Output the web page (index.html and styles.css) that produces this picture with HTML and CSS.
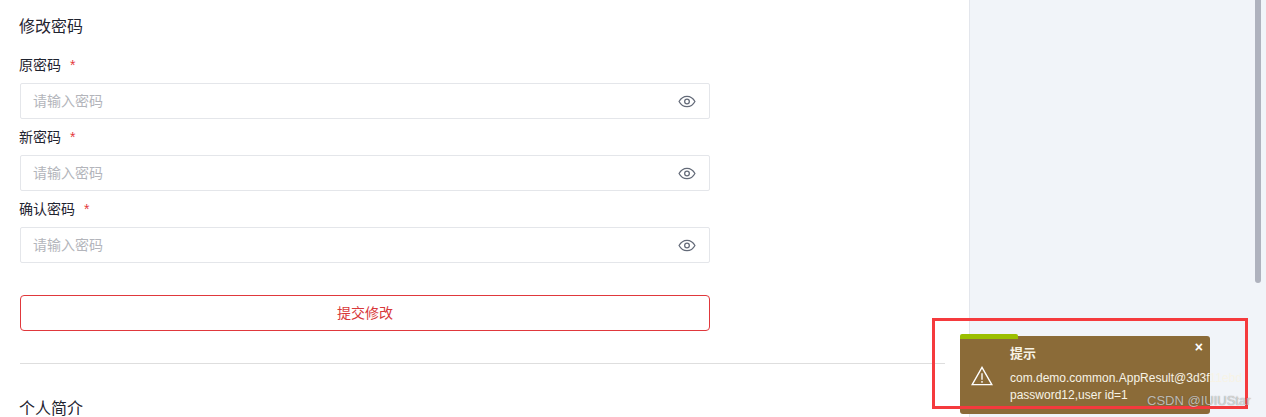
FILE: index.html
```html
<!DOCTYPE html>
<html lang="zh">
<head>
<meta charset="utf-8">
<title>修改密码</title>
<link rel="stylesheet" href="styles.css">
</head>
<body>
<div class="page">
  <main class="main">
    <h2 class="title">修改密码</h2>
    <div class="field">
      <label class="label">原密码<span class="req">*</span></label>
      <div class="input"><span class="ph">请输入密码</span>
        <svg class="eye" viewBox="0 0 20 14"><path d="M1.2 7C3.2 3.3 6.3 1.2 10 1.2S16.8 3.3 18.8 7C16.8 10.7 13.7 12.8 10 12.8S3.2 10.7 1.2 7Z"/><circle cx="10" cy="7" r="2.6"/></svg>
      </div>
    </div>
    <div class="field">
      <label class="label">新密码<span class="req">*</span></label>
      <div class="input"><span class="ph">请输入密码</span>
        <svg class="eye" viewBox="0 0 20 14"><path d="M1.2 7C3.2 3.3 6.3 1.2 10 1.2S16.8 3.3 18.8 7C16.8 10.7 13.7 12.8 10 12.8S3.2 10.7 1.2 7Z"/><circle cx="10" cy="7" r="2.6"/></svg>
      </div>
    </div>
    <div class="field">
      <label class="label">确认密码<span class="req">*</span></label>
      <div class="input"><span class="ph">请输入密码</span>
        <svg class="eye" viewBox="0 0 20 14"><path d="M1.2 7C3.2 3.3 6.3 1.2 10 1.2S16.8 3.3 18.8 7C16.8 10.7 13.7 12.8 10 12.8S3.2 10.7 1.2 7Z"/><circle cx="10" cy="7" r="2.6"/></svg>
      </div>
    </div>
    <button class="submit" type="button">提交修改</button>
    <hr class="divider">
    <h2 class="title">个人简介</h2>
  </main>
  <aside class="side"><div class="thumb"></div></aside>
</div>
<div class="toast">
  <div class="toast-bar"></div>
  <svg class="toast-icon" viewBox="0 0 24 22"><path d="M12 1.5 22.8 20.5H1.2Z"/><path d="M12 8V15M12 16.6V18.4"/></svg>
  <div class="toast-body">
    <div class="toast-title">提示</div>
    <div class="toast-msg">com.demo.common.AppResult@3d3f11ebd<br>password12,user id=1</div>
  </div>
  <span class="toast-close">×</span>
</div>
<div class="annot"></div>
<div class="mark">CSDN @IUIUStar</div>
</body>
</html>
```
FILE: styles.css
```css
* { box-sizing: border-box; }
html, body { margin: 0; height: 100%; overflow: hidden; }
body { font-family: "Liberation Sans", "Noto Sans CJK SC", sans-serif; color: #1f2430; background: #fff; }
.page { display: flex; height: 417px; overflow: hidden; }
.main { width: 970px; flex: none; padding: 16px 24px 0 20px; border-right: 1px solid #e3e6ec; background: #fff; }
.title { margin: 0 0 0 -1px; font-size: 16px; font-weight: 400; line-height: 22px; }
.title + .field { margin-top: 18px; }
.label { display: block; margin-left: -1px; font-size: 14px; line-height: 18px; height: 18px; margin-bottom: 9px; }
.field + .field .label { margin-top: 9px; }
.req { color: #e4393c; margin-left: 9px; }
.input { width: 690px; height: 36px; border: 1px solid #e4e6ea; border-radius: 2px; display: flex; align-items: center; justify-content: space-between; padding: 0 13px 0 12px; }
.ph { font-size: 14px; color: #b3b5bb; padding-bottom: 2px; }
.eye { width: 18px; height: 13px; fill: none; stroke: #636a78; stroke-width: 1.4; }
.submit { display: block; width: 690px; height: 36px; margin-top: 32px; background: #fff; border: 1px solid #e0383c; border-radius: 4px; color: #d8383a; font: inherit; font-size: 14px; padding: 0 0 2px; }
.divider { margin: 32px 0 34px; border: 0; border-top: 1px solid #dedede; }
.side { flex: 1; background: #f1f4f9; position: relative; }
.thumb { position: absolute; left: 285px; top: 0; width: 6px; height: 283px; background: #afb2be; border-radius: 0 0 3px 3px; }
.toast { position: absolute; left: 960px; top: 336px; width: 250px; height: 78px; background: #8b6b38; border-radius: 3px; color: #f7f3e6; }
.toast-bar { position: absolute; left: 0; top: -2px; width: 58px; height: 5px; background: #9bbf00; border-radius: 2px 2px 0 0; }
.toast-icon { position: absolute; left: 10px; top: 30px; width: 24px; height: 20px; fill: none; stroke: #fff; stroke-width: 1.5; }
.toast-body { position: absolute; left: 50px; top: 9px; white-space: nowrap; }
.toast-title { font-size: 13px; line-height: 18px; font-weight: 700; }
.toast-msg { margin-top: 7px; font-size: 12px; line-height: 17px; }
.toast-close { position: absolute; right: 7px; top: 3px; font-size: 14px; line-height: 16px; font-weight: 700; color: #fff; }
.annot { position: absolute; left: 932px; top: 318px; width: 316px; height: 91px; border: 3px solid #f53a3d; }
.mark { position: absolute; left: 1147px; top: 393px; font-size: 13px; line-height: 16px; color: rgba(255,255,255,.62); text-shadow: 0 0 1px rgba(60,60,60,.7); white-space: nowrap; }
```
